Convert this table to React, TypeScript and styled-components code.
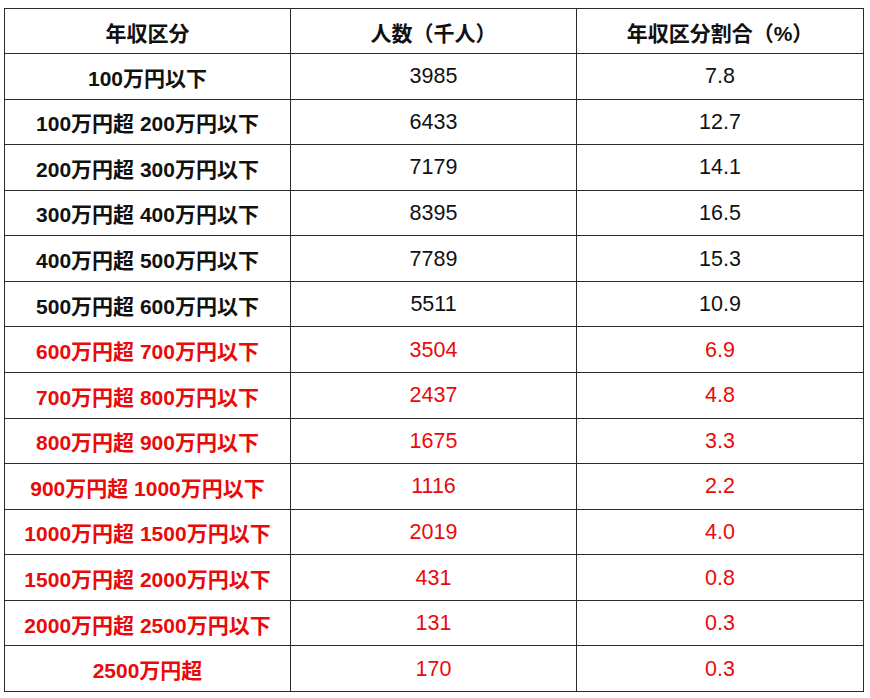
import React from "react";
import styled, { createGlobalStyle } from "styled-components";

const Global = createGlobalStyle`
  html, body { margin: 0; padding: 0; background: #ffffff; }
  body { font-family: "Liberation Sans", "Noto Sans CJK JP", sans-serif; }
`;

const Page = styled.div`
  padding: 8px 0 0 4px;
`;

const Grid = styled.div`
  display: grid;
  width: 860px;
  height: 684px;
  box-sizing: border-box;
  grid-template-columns: 285px 285px 286px;
  grid-template-rows: 44px repeat(14, 1fr);
  gap: 1px;
  padding: 1px;
  background: #2b2b2b;
`;

const Cell = styled.div<{ $red?: boolean; $bold?: boolean }>`
  background: #ffffff;
  display: flex;
  align-items: center;
  justify-content: center;
  font-family: "Liberation Sans", "Noto Sans CJK JP", sans-serif;
  font-size: ${(p) => (p.$bold ? "21px" : "21.5px")};
  font-weight: ${(p) => (p.$bold ? 700 : 400)};
  color: ${(p) => (p.$red ? "#ea0a0a" : "#111111")};
  white-space: pre;
  padding-top: 1px;
`;

const rows: [string, string, string][] = [
  ["100万円以下", "3985", "7.8"],
  ["100万円超 200万円以下", "6433", "12.7"],
  ["200万円超 300万円以下", "7179", "14.1"],
  ["300万円超 400万円以下", "8395", "16.5"],
  ["400万円超 500万円以下", "7789", "15.3"],
  ["500万円超 600万円以下", "5511", "10.9"],
  ["600万円超 700万円以下", "3504", "6.9"],
  ["700万円超 800万円以下", "2437", "4.8"],
  ["800万円超 900万円以下", "1675", "3.3"],
  ["900万円超 1000万円以下", "1116", "2.2"],
  ["1000万円超 1500万円以下", "2019", "4.0"],
  ["1500万円超 2000万円以下", "431", "0.8"],
  ["2000万円超 2500万円以下", "131", "0.3"],
  ["2500万円超", "170", "0.3"],
];

export default function App() {
  return (
    <>
      <Global />
      <Page>
        <Grid>
          <Cell $bold>年収区分</Cell>
          <Cell $bold>人数（千人）</Cell>
          <Cell $bold>年収区分割合（%）</Cell>
          {rows.map(([a, b, c], i) => {
            const red = i >= 6;
            return (
              <React.Fragment key={a}>
                <Cell $bold $red={red}>{a}</Cell>
                <Cell $red={red}>{b}</Cell>
                <Cell $red={red}>{c}</Cell>
              </React.Fragment>
            );
          })}
        </Grid>
      </Page>
    </>
  );
}
